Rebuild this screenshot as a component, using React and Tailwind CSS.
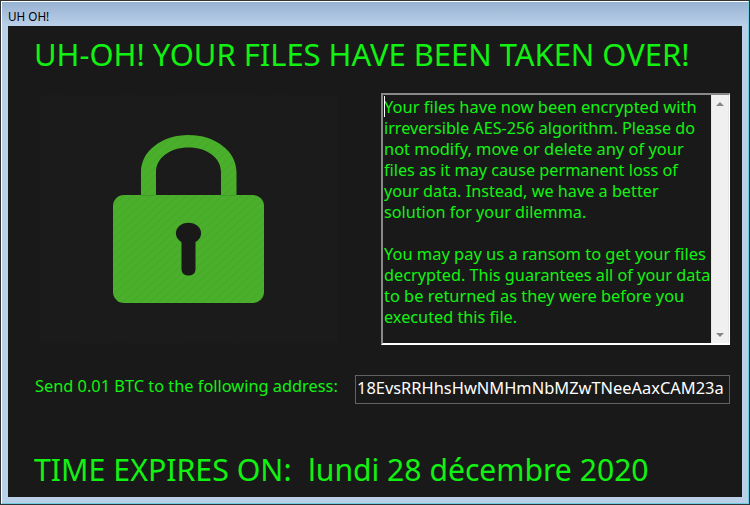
import { useLayoutEffect, useRef } from 'react';

// One line of text condensed horizontally to the given width.
function FitText({ width, className = '', children }) {
  const ref = useRef(null);
  useLayoutEffect(() => {
    const el = ref.current;
    el.style.transform = `scaleX(${width / el.offsetWidth})`;
  }, [width, children]);
  return (
    <div className={className}>
      <span ref={ref} className="inline-block origin-left whitespace-pre">
        {children}
      </span>
    </div>
  );
}

const NOTE = [
  ['Your files have now been encrypted with', 313],
  ['irreversible AES-256 algorithm. Please do', 311],
  ['not modify, move or delete any of your', 300],
  ['files as it may cause permanent loss of', 294],
  ['your data. Instead, we have a better', 275],
  ['solution for your dilemma.', 202],
  ['', 0],
  ['You may pay us a ransom to get your files', 322],
  ['decrypted. This guarantees all of your data', 326],
  ['to be returned as they were before you', 300],
  ['executed this file.', 133],
];

function Padlock() {
  return (
    <svg className="block h-[248px] w-[297px]" viewBox="40 95 297 248">
      <defs>
        <pattern id="hatch" width="6" height="6" patternUnits="userSpaceOnUse" patternTransform="rotate(48)">
          <rect width="1" height="6" fill="#000" opacity="0.045" />
        </pattern>
      </defs>
      <rect x="40" y="95" width="297" height="248" fill="#1b1b1b" />
      <path
        d="M141 196V172C141 151 162 135 188.500 135S236.500 151 236.500 172V196H221V172C221 158 207 147.500 188.500 147.500S156 158 156 172V196Z"
        fill="#4aaf2b"
      />
      <rect x="113" y="195" width="151" height="108" rx="11" fill="#4aaf2b" />
      <path d="M141 195.500h15M221 195.500h15.500" stroke="#429f27" strokeWidth="1" />
      <rect x="40" y="95" width="297" height="248" fill="url(#hatch)" />
      <ellipse cx="188.500" cy="233.300" rx="12.600" ry="10.600" fill="#191919" />
      <rect x="181.500" y="234" width="14" height="41.500" rx="6" fill="#191919" />
    </svg>
  );
}

function ScrollBar() {
  return (
    <div className="flex w-[18px] shrink-0 flex-col items-center justify-between border-x border-[#e6e6e6] bg-[#f0f0f0] pt-[7px] pb-[6px]">
      <svg className="block h-[4px] w-[8px]" viewBox="0 0 8 4">
        <path d="M4 0L8 4H0Z" fill="#858585" />
      </svg>
      <svg className="block h-[4px] w-[8px]" viewBox="0 0 8 4">
        <path d="M0 0H8L4 4Z" fill="#858585" />
      </svg>
    </div>
  );
}

export default function App() {
  return (
    <div className="h-[505px] w-[750px] overflow-hidden border border-[#303236] bg-[#bad0e9] font-['Noto_Sans','Open_Sans',sans-serif] text-[#12f212]">
      <div className="h-[503px] border-t border-r border-b border-l border-t-white border-r-[#70cce0] border-b-[#70cce0] border-l-white">
        <header className="h-6 bg-linear-to-b from-[#98b2d2] to-[#bad0e9] pt-[6px] pl-[6px] text-black">
          <FitText width={41} className="h-[18px] text-[12px] leading-[18px]">UH OH!</FitText>
        </header>
        <main className="mx-[6px] h-[471px] overflow-hidden bg-[#191919] pl-[26px]">
          <FitText width={655} className="h-[67px] pt-[7px] text-[31px] leading-[42px]">
            UH-OH! YOUR FILES HAVE BEEN TAKEN OVER!
          </FitText>
          <div className="flex h-[252px] justify-between pr-3">
            <div className="pt-[2px] pl-[6px]">
              <Padlock />
            </div>
            <div className="flex h-[252px] w-[349px] border-t-2 border-r border-b-2 border-l-2 border-t-[#888888] border-r-white border-b-white border-l-[#888888]">
              <div className="relative min-w-0 flex-1 pt-[1px] pl-px text-[17px]">
                {NOTE.map(([line, width], i) => (
                  <FitText key={i} width={width} className="h-[21px] leading-[21px]">
                    {line}
                  </FitText>
                ))}
                <span className="absolute top-px left-px h-[21px] w-px bg-white" />
              </div>
              <ScrollBar />
            </div>
          </div>
          <div className="mt-[30px] flex h-[29px] justify-between pr-3">
            <FitText width={303} className="pl-px text-[17px] leading-[22px]">
              Send 0.01 BTC to the following address:
            </FitText>
            <div className="h-[29px] w-[375px] border border-[#626262] pl-px text-white">
              <FitText width={367} className="text-[17px] leading-[24px]">
                18EvsRRHhsHwNMHmNbMZwTNeeAaxCAM23a
              </FitText>
            </div>
          </div>
          <div className="mt-[44px] flex h-[42px] text-[31px] leading-[42px]">
            <FitText width={258} className="w-[274px]">TIME EXPIRES ON:</FitText>
            <FitText width={341}>lundi 28 décembre 2020</FitText>
          </div>
        </main>
      </div>
    </div>
  );
}
